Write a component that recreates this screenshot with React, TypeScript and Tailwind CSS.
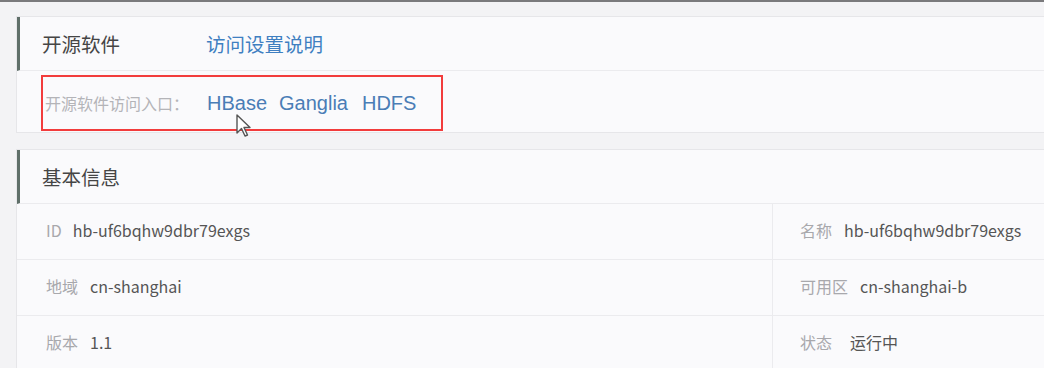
import React from "react";

const cjk = { fontFamily: '"Noto Sans CJK SC", "Noto Sans", sans-serif' };
const mixed = { fontFamily: '"Liberation Sans", "Noto Sans CJK SC", sans-serif' };

function Cursor() {
  return (
    <svg width="16" height="24" viewBox="0 0 16 24" className="absolute left-[193px] top-[37px]">
      <path d="M1 1 L1 19 L5.5 14.5 L9 22 L11.5 21 L8 13.5 L14 13.5 Z" fill="#fff" stroke="#555" strokeWidth="1.4" strokeLinejoin="round" />
    </svg>
  );
}

function PanelHeader({ children }: { children: React.ReactNode }) {
  return (
    <div className="flex h-[54px] items-center border-b border-[#ebebee] border-l-[3px] border-l-[#5f6f69] pl-[22px] text-[19.5px] text-[#454545]">
      {children}
    </div>
  );
}

function Field({ label, value, gap }: { label: string; value: string; gap: string }) {
  return (
    <div className={`flex items-center ${gap}`}>
      <span className="text-[#a8a8ac]">{label}</span>
      <span className="text-[#555]">{value}</span>
    </div>
  );
}

const rows = [
  { l: ["ID", "hb-uf6bqhw9dbr79exgs"], lg: "gap-[11px]", r: ["名称", "hb-uf6bqhw9dbr79exgs"], rg: "gap-[12px]" },
  { l: ["地域", "cn-shanghai"], lg: "gap-[12px]", r: ["可用区", "cn-shanghai-b"], rg: "gap-[12px]" },
  { l: ["版本", "1.1"], lg: "gap-[12px]", r: ["状态", "运行中"], rg: "gap-[18px]" },
];

export default function App() {
  return (
    <div className="h-[368px] w-[1044px] overflow-hidden border-t-2 border-t-[#7a7a7c] bg-[#f3f3f5]" style={cjk}>
      <div className="pl-4 pt-[14px]">
        <section className="border border-r-0 border-[#e6e6e9] bg-[#fafafc]">
          <PanelHeader>
            <span className="w-[164px]">开源软件</span>
            <span className="text-[#3f7fc1]">访问设置说明</span>
          </PanelHeader>
          <div className="flex h-[61px] items-center pl-[24px] pt-[2px]">
            <div className="relative flex h-[56px] w-[402px] items-center border-2 border-[#f23c3c] pl-[2px]">
              <span className="w-[162px] text-[16px] text-[#b4b4b8]">开源软件访问入口：</span>
              <div className="flex gap-3 text-[20px] text-[#4a7db6]" style={mixed}>
                <span>HBase</span>
                <span className="mr-[2px]">Ganglia</span>
                <span>HDFS</span>
              </div>
              <Cursor />
            </div>
          </div>
        </section>

        <section className="mt-4 border-t border-l border-[#e6e6e9] bg-[#fafafc]">
          <PanelHeader>
            <span>基本信息</span>
          </PanelHeader>
          {rows.map((row, i) => (
            <div key={i} className="grid h-[56px] grid-cols-[756px_1fr] border-b border-[#ebebee] text-[16px]">
              <div className="flex items-center border-r border-[#ebebee] pb-[3px] pl-[29px]">
                <Field label={row.l[0]} value={row.l[1]} gap={row.lg} />
              </div>
              <div className="flex items-center pb-[3px] pl-[27px]">
                <Field label={row.r[0]} value={row.r[1]} gap={row.rg} />
              </div>
            </div>
          ))}
        </section>
      </div>
    </div>
  );
}
